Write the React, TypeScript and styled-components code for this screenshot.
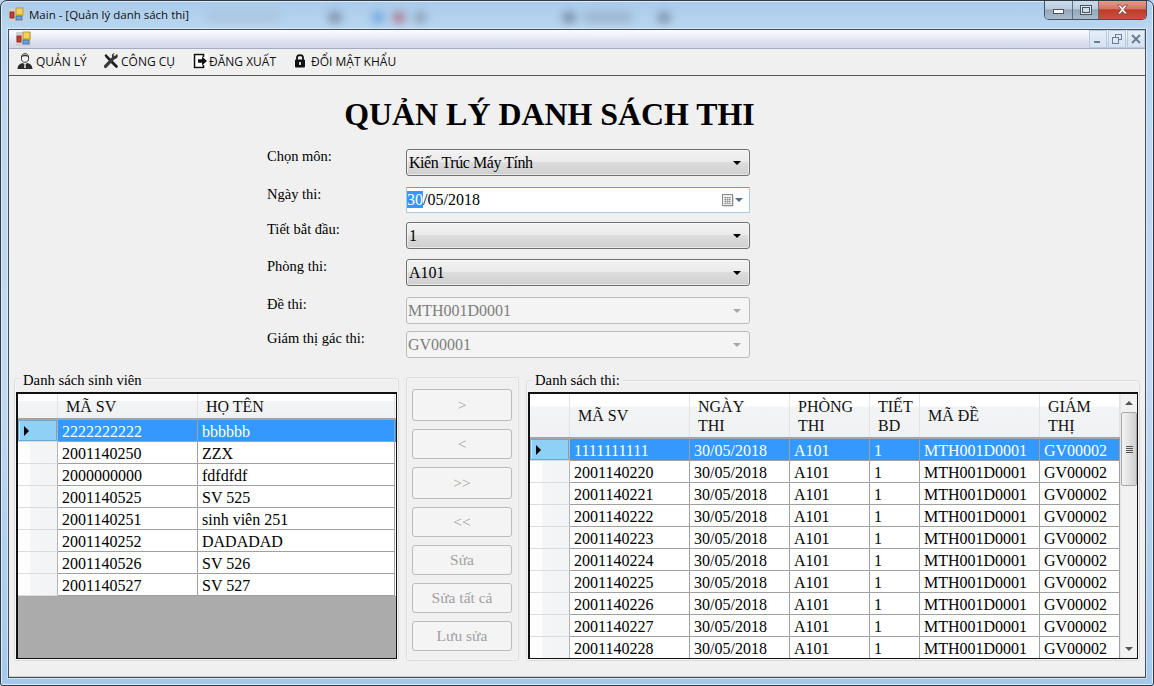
import React from "react";
import styled, { createGlobalStyle, css } from "styled-components";

const Global = createGlobalStyle`
  html, body { margin: 0; padding: 0; overflow: hidden; background: #b7d3ef; }
  * { box-sizing: border-box; }
`;

const SERIF = `"Liberation Serif", "Times New Roman", serif`;
const SANS = `"Open Sans", "Noto Sans", sans-serif`;

const Frame = styled.div`
  position: relative;
  width: 1154px;
  height: 686px;
  display: flex;
  flex-direction: column;
  overflow: hidden;
  border: 1px solid #2e3a46;
  border-radius: 7px 7px 3px 3px;
  background: linear-gradient(180deg, #a9cbea 0%, #bad6f0 4%, #c2daf1 55%, #a4c9ec 100%);
  box-shadow: inset 0 0 0 1px #dfecf8;
  padding: 0 7px 7px 7px;
`;

const Blur = styled.span<{ $x: number; $w: number; $c: string }>`
  position: absolute;
  top: 11px;
  left: ${(p) => p.$x}px;
  width: ${(p) => p.$w}px;
  height: 11px;
  background: ${(p) => p.$c};
  border-radius: 6px;
  filter: blur(4px);
`;

const TitleBar = styled.div`
  position: relative;
  height: 28px;
  flex: none;
  display: flex;
  align-items: center;
  padding: 0 0 0 1px;
  gap: 2px;
`;

const TitleText = styled.span`
  font: 11.5px ${SANS};
  color: #111;
  position: relative;
  top: -1px;
  margin-left: 2px;
`;

const WinControls = styled.div`
  position: absolute;
  top: -1px;
  right: -1px;
  height: 20px;
  display: flex;
  border: 1px solid #47535f;
  border-top: 0;
  border-radius: 0 0 5px 5px;
  overflow: hidden;
`;

const WinBtn = styled.div<{ $w: number; $close?: boolean }>`
  width: ${(p) => p.$w}px;
  display: flex;
  align-items: center;
  justify-content: center;
  border-right: ${(p) => (p.$close ? "0" : "1px solid #5f6f7f")};
  background: ${(p) =>
    p.$close
      ? "linear-gradient(180deg,#e6a091 0%,#d47766 45%,#bf3b27 52%,#c9523c 100%)"
      : "linear-gradient(180deg,#cfdeed 0%,#bccddd 45%,#95a8ba 52%,#a9bccd 100%)"};
`;

const MinGlyph = styled.span`
  width: 11px;
  height: 5px;
  background: #fff;
  border: 1px solid #4a5560;
  margin-top: 4px;
`;
const MaxGlyph = styled.span`
  width: 12px;
  height: 10px;
  border: 1px solid #4a5560;
  background: #dfe8f1;
  display: flex;
  align-items: center;
  justify-content: center;
  &::after {
    content: "";
    width: 6px;
    height: 4px;
    border: 1px solid #4a5560;
    background: #cfdbe6;
  }
`;

const Inner = styled.div`
  flex: 1;
  display: flex;
  flex-direction: column;
  min-height: 0;
  border: 1px solid #454f5a;
  background: #f0f0f0;
  box-shadow: 0 0 0 1px rgba(255, 255, 255, 0.45);
`;

const MdiBar = styled.div`
  height: 19px;
  flex: none;
  display: flex;
  align-items: center;
  padding: 0 0 0 7px;
  background: linear-gradient(180deg, #fbfcfe 0%, #f0f2f9 30%, #d9deee 75%, #d3d8ea 100%);
  border-bottom: 1px solid #a6abc4;
`;

const MdiControls = styled.div`
  margin-left: auto;
  display: flex;
  gap: 1px;
`;

const MdiBtn = styled.div`
  width: 18px;
  height: 18px;
  border: 1px solid #b9cbdc;
  background: linear-gradient(180deg, #e5eef8, #d6e2f0);
  display: flex;
  align-items: center;
  justify-content: center;
`;

const MenuBar = styled.div`
  height: 27px;
  flex: none;
  display: flex;
  align-items: center;
  padding: 0 0 2px 8px;
  background: #f0f0f0;
  border-bottom: 1px solid #5b5b5b;
`;

const MenuItem = styled.div<{ $w: number; $gap: number }>`
  width: ${(p) => p.$w}px;
  flex: none;
  display: flex;
  align-items: center;
  gap: ${(p) => p.$gap}px;
  font: 12px ${SANS};
  color: #111;
  white-space: nowrap;
`;

const Content = styled.div`
  flex: 1;
  min-height: 0;
  display: flex;
  flex-direction: column;
  border-bottom: 1px solid #cfcfcf;
  background: #f0f0f0;
`;

const Heading = styled.h1`
  margin: 21px 0 0;
  padding-right: 55px;
  text-align: center;
  font: bold 31.9px/36px ${SERIF};
  color: #000;
`;

const Form = styled.div`
  margin: 16px 0 0 258px;
  width: 483px;
  display: flex;
  flex-direction: column;
`;

const FormRow = styled.div<{ $gap: number }>`
  display: flex;
  align-items: flex-start;
  margin-top: ${(p) => p.$gap}px;
`;

const Label = styled.div`
  width: 139px;
  flex: none;
  margin-top: -1px;
  font: 14.5px/17px ${SERIF};
  color: #000;
`;

const comboBase = css`
  width: 344px;
  height: 27px;
  display: flex;
  align-items: center;
  font: 16px ${SERIF};
  border-radius: 3px;
`;

const Combo = styled.div`
  ${comboBase}
  border: 1px solid #707070;
  color: #000;
  padding: 0 8px 0 2px;
  background: linear-gradient(180deg, #f2f2f2 0%, #ebebeb 46%, #dddddd 50%, #cfcfcf 100%);
  box-shadow: inset 0 0 0 1px rgba(255, 255, 255, 0.55);
`;

const ComboDisabled = styled.div`
  ${comboBase}
  border: 1px solid #bcbcbc;
  color: #7d7d7d;
  padding: 0 8px 0 1px;
  background: #f4f4f4;
`;

const ComboValue = styled.span<{ $tight?: boolean }>`
  flex: 1;
  letter-spacing: ${(p) => (p.$tight ? "-0.45px" : "0")};
`;

const Caret = styled.span<{ $c: string }>`
  width: 0;
  height: 0;
  border-left: 4px solid transparent;
  border-right: 4px solid transparent;
  border-top: 4px solid ${(p) => p.$c};
`;

const DateBox = styled.div`
  ${comboBase}
  height: 26px;
  border: 1px solid #abc9df;
  border-top-color: #6f9dbb;
  border-radius: 0;
  background: #fff;
  color: #000;
  padding: 0 6px 0 0;
`;

const DateSel = styled.span`
  background: #3399ff;
  color: #fff;
`;

const DateCaret = styled.span`
  margin-left: 1px;
  width: 0;
  height: 0;
  border-left: 4px solid transparent;
  border-right: 4px solid transparent;
  border-top: 4px solid #566a8c;
`;

const Panels = styled.div`
  margin: 19px 0 0 5px;
  display: flex;
  height: 284px;
`;

const Group = styled.div<{ $w: number; $ml: number; $pt: number; $mt: number }>`
  position: relative;
  width: ${(p) => p.$w}px;
  margin-left: ${(p) => p.$ml}px;
  margin-top: ${(p) => p.$mt}px;
  padding: ${(p) => p.$pt}px 1px 1px 1px;
  border: 1px solid #dcdcdc;
  border-radius: 3px;
  box-shadow: inset 0 0 0 1px #f6f6f6;
  display: flex;
  flex-direction: column;
`;

const Legend = styled.span<{ $top: number }>`
  position: absolute;
  top: ${(p) => p.$top}px;
  left: 5px;
  padding: 0 3px;
  background: #f0f0f0;
  font: 14.7px/17px ${SERIF};
  color: #000;
  white-space: nowrap;
`;

const Grid = styled.div`
  flex: 1;
  min-height: 0;
  display: flex;
  border: solid #111;
  border-width: 2px 1px 1px 2px;
  background: #ababab;
  overflow: hidden;
`;

const GridBody = styled.div`
  flex: 1;
  min-width: 0;
  display: flex;
  flex-direction: column;
`;

const HeaderRow = styled.div<{ $h: number }>`
  display: flex;
  flex: none;
  height: ${(p) => p.$h}px;
  background: linear-gradient(180deg, #fff 0%, #fff 28%, #f3f4f6 30%, #f0f1f3 100%);
  border-bottom: 2px solid #a4a4a4;
`;

const HeaderCell = styled.div<{ $w: number }>`
  width: ${(p) => p.$w}px;
  flex: none;
  padding: 0 8px;
  display: flex;
  align-items: center;
  font: 16px/19px ${SERIF};
  color: #111;
  white-space: pre-line;
  border-right: 1px solid #e3e3e3;
`;

const Row = styled.div<{ $sel?: boolean }>`
  display: flex;
  flex: none;
  height: 22px;
  background: ${(p) => (p.$sel ? "#3399ff" : "#fff")};
  color: ${(p) => (p.$sel ? "#fff" : "#000")};
`;

const RowHead = styled.div<{ $w: number; $sel?: boolean }>`
  width: ${(p) => p.$w}px;
  flex: none;
  display: flex;
  align-items: center;
  padding-left: 6px;
  border-right: 1px solid #b4b4b4;
  border-bottom: 1px solid #dcdcdc;
  background: ${(p) =>
    p.$sel
      ? "linear-gradient(90deg,#c9e5f8 0,#c9e5f8 2px,#8fd1f6 2px,#8fd1f6 100%)"
      : "linear-gradient(90deg,#fdfdfd 0,#fdfdfd 30%,#f5f6f8 30%,#f2f3f5 100%)"};
  box-shadow: ${(p) => (p.$sel ? "inset 0 0 0 1px #6fa8cf" : "none")};
`;

const Marker = styled.span`
  width: 0;
  height: 0;
  border-top: 5px solid transparent;
  border-bottom: 5px solid transparent;
  border-left: 5px solid #000;
`;

const Cell = styled.div<{ $w: number }>`
  width: ${(p) => p.$w}px;
  flex: none;
  padding: 1px 0 0 4px;
  font: 16px/21px ${SERIF};
  white-space: nowrap;
  overflow: hidden;
  border-right: 1px solid #a0a0a0;
  border-bottom: 1px solid #a0a0a0;
`;

const Scrollbar = styled.div`
  width: 17px;
  flex: none;
  display: flex;
  flex-direction: column;
  align-items: center;
  background: #f1f1f1;
  border-left: 1px solid #e6e6e6;
`;

const ScrollArrow = styled.span<{ $up?: boolean }>`
  flex: none;
  margin: 7px 0;
  width: 0;
  height: 0;
  border-left: 4px solid transparent;
  border-right: 4px solid transparent;
  ${(p) =>
    p.$up ? "border-bottom: 4px solid #555;" : "border-top: 4px solid #555;"}
`;

const ScrollThumb = styled.div`
  width: 16px;
  height: 74px;
  border: 1px solid #a8a8a8;
  border-radius: 2px;
  background: linear-gradient(90deg, #f3f3f3, #e2e2e2 50%, #cfcfcf);
  display: flex;
  flex-direction: column;
  align-items: center;
  justify-content: center;
  gap: 1px;
`;

const Grip = styled.span`
  width: 7px;
  height: 1px;
  background: #555;
`;

const ScrollSpace = styled.div`
  flex: 1;
`;

const ButtonColumn = styled.div`
  display: flex;
  flex-direction: column;
  gap: 8px;
  padding: 11px 4px 0;
`;

const Btn = styled.div<{ $h: number }>`
  height: ${(p) => p.$h}px;
  flex: none;
  width: 100px;
  border: 1px solid #bcbcbc;
  border-radius: 3px;
  background: #f4f4f4;
  display: flex;
  align-items: center;
  justify-content: center;
  font: 15.5px ${SERIF};
  color: #a0a0a0;
`;

const AppIcon = () => (
  <svg width="16" height="16" viewBox="0 0 16 16">
    <rect x="0" y="1" width="15" height="14" fill="#cfcfcf" />
    <rect x="7" y="1" width="7" height="7" fill="#f5d155" stroke="#b08a20" strokeWidth="0.8" />
    <rect x="1" y="5" width="4" height="6" fill="#cc3a2e" stroke="#8a2018" strokeWidth="0.8" />
    <rect x="7" y="9" width="6" height="4" fill="#6aa0e0" stroke="#3a6aa8" strokeWidth="0.8" />
  </svg>
);

const UserIcon = () => (
  <svg width="16" height="16" viewBox="0 0 16 16">
    <ellipse cx="8" cy="5" rx="3.6" ry="4.3" fill="#f4f4f4" stroke="#333" strokeWidth="1" />
    <path d="M4.6 4C5 1 11 1 11.4 4C10 3 6 3 4.6 4Z" fill="#333" />
    <path d="M0.5 16C0.8 11.5 3.5 10.5 6 10L8 12L10 10C12.5 10.5 15.2 11.5 15.5 16Z" fill="#2b2b2b" />
    <path d="M7.4 11.5H8.6L8.9 15H7.1Z" fill="#e8e8e8" />
  </svg>
);

const ToolsIcon = () => (
  <svg width="16" height="16" viewBox="0 0 16 16">
    <path d="M1.5 2.5L3 1L9.5 7.5L14.5 12.5Q15.3 13.5 14.4 14.4Q13.5 15.3 12.5 14.5L7.5 9.5L2.8 4.5Z" fill="#1d1d1d" />
    <path d="M14.8 3.4Q15 1.8 13.8 1L12 3L10.8 2.6L10.4 1.4L12 0.3Q10 0 9 1.6Q8.5 3 9.2 4L1.3 12.3Q0.3 13.6 1.4 14.7Q2.6 15.6 3.7 14.6L11.8 5.9Q13.6 6.2 14.8 3.4Z" fill="#3a3a3a" />
  </svg>
);

const LogoutIcon = () => (
  <svg width="16" height="16" viewBox="0 0 16 16">
    <rect width="16" height="16" fill="#fff" />
    <path d="M11.5 4V1.5H2.5V14.5H11.5V12" fill="none" stroke="#111" strokeWidth="1.6" />
    <path d="M6 6.3H10V3.6L15 8L10 12.4V9.7H6Z" fill="#111" />
  </svg>
);

const LockIcon = () => (
  <svg width="16" height="16" viewBox="2 0 16 16">
    <path d="M5 7V4.6C5 1.2 11 1.2 11 4.6V7" fill="none" stroke="#111" strokeWidth="1.8" />
    <rect x="3" y="6.6" width="10" height="8" rx="1" fill="#111" />
    <rect x="7.2" y="9" width="1.6" height="3" fill="#fff" />
  </svg>
);

const CalendarIcon = () => (
  <svg width="12" height="13" viewBox="0 0 12 13">
    <rect x="1.5" y="1.5" width="10" height="11" fill="#bbb" />
    <rect x="0.5" y="0.5" width="10" height="11" fill="#eee" stroke="#8a8a8a" />
    <path d="M2 3.5H9M2 5.5H9M2 7.5H9M2 9.5H9M3.5 3V10M5.5 3V10M7.5 3V10" stroke="#9a9a9a" strokeWidth="0.7" />
  </svg>
);

const MdiMin = () => (
  <svg width="10" height="10" viewBox="0 0 10 10"><rect x="1" y="7" width="6" height="2" fill="#6b7f93" /></svg>
);
const MdiRestore = () => (
  <svg width="10" height="10" viewBox="0 0 10 10" fill="none" stroke="#6b7f93" strokeWidth="1">
    <rect x="3.5" y="0.5" width="6" height="5" />
    <rect x="0.5" y="3.5" width="6" height="6" fill="#dde7f2" />
  </svg>
);
const MdiClose = () => (
  <svg width="10" height="10" viewBox="0 0 10 10"><path d="M1 1L9 9M9 1L1 9" stroke="#6b7f93" strokeWidth="2" /></svg>
);
const CloseGlyph = () => (
  <svg width="13" height="11" viewBox="0 0 13 11">
    <path d="M1.5 1H4.5L6.5 3.5L8.5 1H11.5L8 5.5L11.5 10H8.5L6.5 7.5L4.5 10H1.5L5 5.5Z" fill="#f4f4f4" stroke="#6c4a44" strokeWidth="0.8" />
  </svg>
);

const students: [string, string][] = [
  ["2222222222", "bbbbbb"],
  ["2001140250", "ZZX"],
  ["2000000000", "fdfdfdf"],
  ["2001140525", "SV 525"],
  ["2001140251", "sinh viên 251"],
  ["2001140252", "DADADAD"],
  ["2001140526", "SV 526"],
  ["2001140527", "SV 527"],
];

const exams = [
  "1111111111", "2001140220", "2001140221", "2001140222", "2001140223",
  "2001140224", "2001140225", "2001140226", "2001140227", "2001140228",
];

const examCols = [120, 100, 80, 50, 120, 80];
const examHead = ["MÃ SV", "NGÀY\nTHI", "PHÒNG\nTHI", "TIẾT\nBD", "MÃ ĐỀ", "GIÁM\nTHỊ"];

export default function App() {
  return (
    <Frame>
      <Global />
      <Blur $x={205} $w={75} $c="rgba(150,170,195,.28)" />
      <Blur $x={327} $w={14} $c="rgba(70,80,100,.5)" />
      <Blur $x={371} $w={12} $c="rgba(60,130,210,.6)" />
      <Blur $x={392} $w={12} $c="rgba(170,50,70,.6)" />
      <Blur $x={413} $w={13} $c="rgba(100,115,130,.5)" />
      <Blur $x={561} $w={14} $c="rgba(70,85,110,.55)" />
      <Blur $x={582} $w={50} $c="rgba(110,130,155,.35)" />
      <Blur $x={656} $w={14} $c="rgba(70,85,105,.5)" />
      <TitleBar>
        <AppIcon />
        <TitleText>Main - [Quản lý danh sách thi]</TitleText>
        <WinControls>
          <WinBtn $w={28}><MinGlyph /></WinBtn>
          <WinBtn $w={26}><MaxGlyph /></WinBtn>
          <WinBtn $w={47} $close><CloseGlyph /></WinBtn>
        </WinControls>
      </TitleBar>
      <Inner>
        <MdiBar>
          <AppIcon />
          <MdiControls>
            <MdiBtn><MdiMin /></MdiBtn>
            <MdiBtn><MdiRestore /></MdiBtn>
            <MdiBtn><MdiClose /></MdiBtn>
          </MdiControls>
        </MdiBar>
        <MenuBar>
          <MenuItem $w={86} $gap={3}><UserIcon />QUẢN LÝ</MenuItem>
          <MenuItem $w={89} $gap={2}><ToolsIcon />CÔNG CỤ</MenuItem>
          <MenuItem $w={102} $gap={1}><LogoutIcon />ĐĂNG XUẤT</MenuItem>
          <MenuItem $w={110} $gap={1}><LockIcon />ĐỔI MẬT KHẨU</MenuItem>
        </MenuBar>
        <Content>
          <Heading>QUẢN LÝ DANH SÁCH THI</Heading>
          <Form>
            <FormRow $gap={0}>
              <Label>Chọn môn:</Label>
              <Combo><ComboValue $tight>Kiến Trúc Máy Tính</ComboValue><Caret $c="#000" /></Combo>
            </FormRow>
            <FormRow $gap={11}>
              <Label>Ngày thi:</Label>
              <DateBox>
                <ComboValue><DateSel>30</DateSel>/05/2018</ComboValue>
                <CalendarIcon />
                <DateCaret />
              </DateBox>
            </FormRow>
            <FormRow $gap={9}>
              <Label>Tiết bắt đầu:</Label>
              <Combo><ComboValue>1</ComboValue><Caret $c="#000" /></Combo>
            </FormRow>
            <FormRow $gap={10}>
              <Label>Phòng thi:</Label>
              <Combo><ComboValue>A101</ComboValue><Caret $c="#000" /></Combo>
            </FormRow>
            <FormRow $gap={11}>
              <Label>Đề thi:</Label>
              <ComboDisabled><ComboValue>MTH001D0001</ComboValue><Caret $c="#a8a8a8" /></ComboDisabled>
            </FormRow>
            <FormRow $gap={7}>
              <Label>Giám thị gác thi:</Label>
              <ComboDisabled><ComboValue>GV00001</ComboValue><Caret $c="#a8a8a8" /></ComboDisabled>
            </FormRow>
          </Form>
          <Panels>
            <Group $w={385} $ml={0} $pt={13} $mt={1}>
              <Legend $top={-7}>Danh sách sinh viên</Legend>
              <Grid>
                <GridBody>
                  <HeaderRow $h={26}>
                    <HeaderCell $w={40} />
                    <HeaderCell $w={140}>MÃ SV</HeaderCell>
                    <HeaderCell $w={197}>HỌ TÊN</HeaderCell>
                  </HeaderRow>
                  {students.map(([id, name], i) => (
                    <Row key={id} $sel={i === 0}>
                      <RowHead $w={40} $sel={i === 0}>{i === 0 && <Marker />}</RowHead>
                      <Cell $w={140}>{id}</Cell>
                      <Cell $w={197}>{name}</Cell>
                    </Row>
                  ))}
                </GridBody>
              </Grid>
            </Group>
            <Group $w={113} $ml={7} $pt={0} $mt={0}>
              <ButtonColumn>
                <Btn $h={32}>&gt;</Btn>
                <Btn $h={30}>&lt;</Btn>
                <Btn $h={32}>&gt;&gt;</Btn>
                <Btn $h={30}>&lt;&lt;</Btn>
                <Btn $h={30}>Sửa</Btn>
                <Btn $h={30}>Sửa tất cả</Btn>
                <Btn $h={30}>Lưu sửa</Btn>
              </ButtonColumn>
            </Group>
            <Group $w={614} $ml={7} $pt={11} $mt={3}>
              <Legend $top={-9}>Danh sách thi:</Legend>
              <Grid>
                <GridBody>
                  <HeaderRow $h={45}>
                    <HeaderCell $w={40} />
                    {examHead.map((h, i) => (
                      <HeaderCell key={h} $w={examCols[i]}>{h}</HeaderCell>
                    ))}
                  </HeaderRow>
                  {exams.map((id, i) => (
                    <Row key={id} $sel={i === 0}>
                      <RowHead $w={40} $sel={i === 0}>{i === 0 && <Marker />}</RowHead>
                      <Cell $w={120}>{id}</Cell>
                      <Cell $w={100}>30/05/2018</Cell>
                      <Cell $w={80}>A101</Cell>
                      <Cell $w={50}>1</Cell>
                      <Cell $w={120}>MTH001D0001</Cell>
                      <Cell $w={80}>GV00002</Cell>
                    </Row>
                  ))}
                </GridBody>
                <Scrollbar>
                  <ScrollArrow $up />
                  <ScrollThumb><Grip /><Grip /><Grip /><Grip /></ScrollThumb>
                  <ScrollSpace />
                  <ScrollArrow />
                </Scrollbar>
              </Grid>
            </Group>
          </Panels>
        </Content>
      </Inner>
    </Frame>
  );
}
